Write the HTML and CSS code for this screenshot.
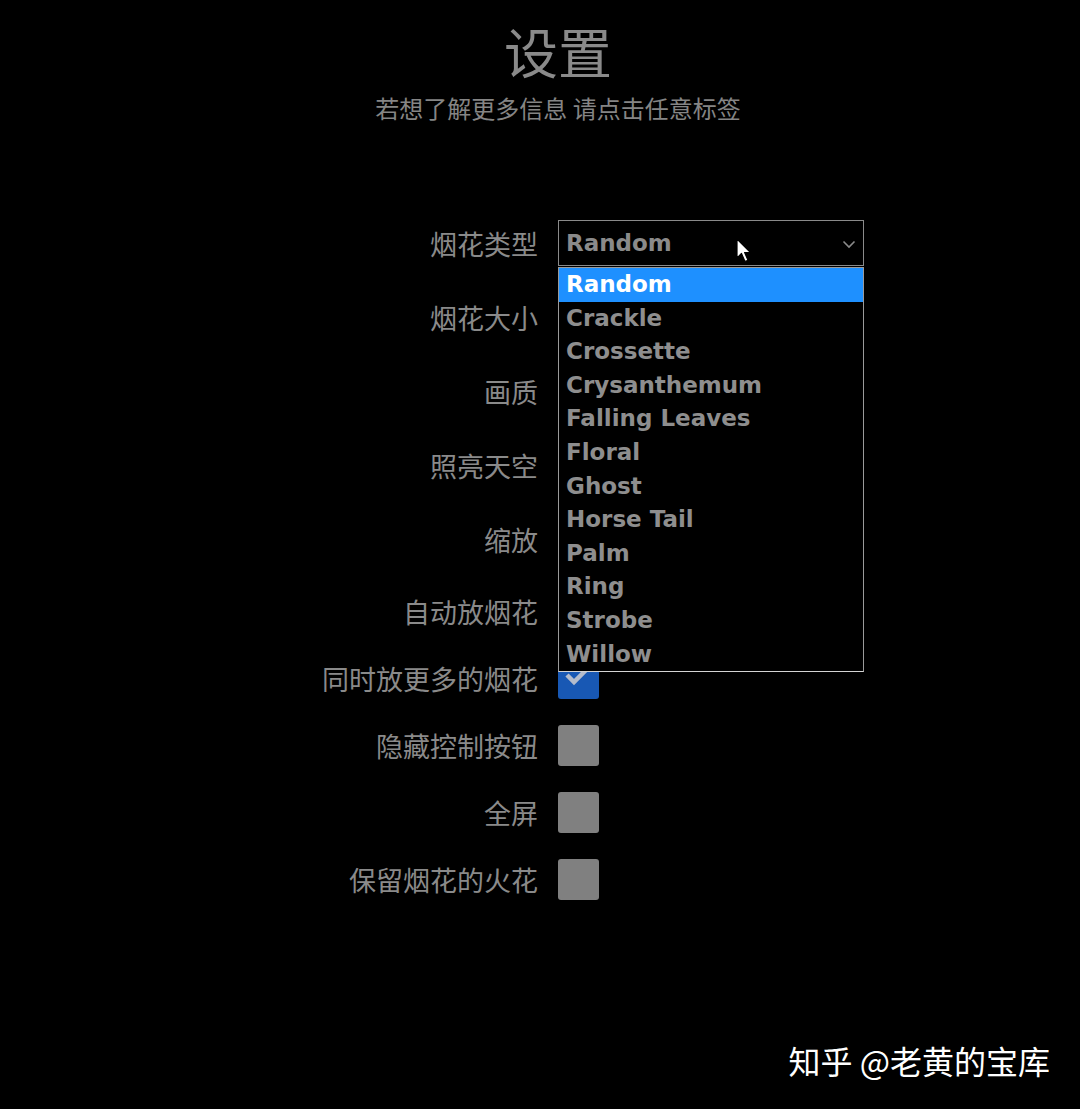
FILE: index.html
```html
<!DOCTYPE html>
<html lang="zh">
<head>
    <meta charset="UTF-8">
    <meta name="viewport" content="width=device-width, initial-scale=1.0">
    <title>设置</title>
    <link rel="stylesheet" href="styles.css">
</head>
<body>
    <main class="settings">
        <header class="intro">
            <h1>设置</h1>
            <p>若想了解更多信息 请点击任意标签</p>
        </header>

        <form class="config">
            <div class="row row-select">
                <label>烟花类型</label>
                <div class="field">
                    <div class="select">
                        <span>Random</span>
                        <svg class="chevron" width="14" height="9" viewBox="0 0 14 9"><path d="M1.5 1.5 L7 7 L12.5 1.5" fill="none" stroke="#8a8a8a" stroke-width="1.6"/></svg>
                        <svg class="cursor" width="16" height="26" viewBox="0 0 16 26"><path d="M1 1 L1 20 L5.5 15.5 L9 23.5 L12 22.2 L8.6 14.5 L14.5 14.5 Z" fill="#fff" stroke="#000" stroke-width="1.2" stroke-linejoin="round"/></svg>
                    </div>
                    <ul class="options">
                        <li class="active">Random</li>
                        <li>Crackle</li>
                        <li>Crossette</li>
                        <li>Crysanthemum</li>
                        <li>Falling Leaves</li>
                        <li>Floral</li>
                        <li>Ghost</li>
                        <li>Horse Tail</li>
                        <li>Palm</li>
                        <li>Ring</li>
                        <li>Strobe</li>
                        <li>Willow</li>
                    </ul>
                </div>
            </div>

            <!-- these controls sit under the open list -->
            <div class="row row-select">
                <label>烟花大小</label>
                <div class="field"><div class="select"></div></div>
            </div>

            <div class="row row-select">
                <label>画质</label>
                <div class="field"><div class="select"></div></div>
            </div>

            <div class="row row-select">
                <label>照亮天空</label>
                <div class="field"><div class="select"></div></div>
            </div>

            <div class="row row-select">
                <label>缩放</label>
                <div class="field"><div class="select"></div></div>
            </div>

            <div class="row row-check first-check">
                <label>自动放烟花</label>
                <div class="field"><span class="checkbox checked"></span></div>
            </div>

            <div class="row row-check">
                <label>同时放更多的烟花</label>
                <div class="field">
                    <span class="checkbox checked">
                        <svg width="41" height="41" viewBox="0 0 41 41"><path d="M9 17 L16 24 L31 9" fill="none" stroke="#b4bccc" stroke-width="4.5"/></svg>
                    </span>
                </div>
            </div>

            <div class="row row-check">
                <label>隐藏控制按钮</label>
                <div class="field"><span class="checkbox"></span></div>
            </div>

            <div class="row row-check">
                <label>全屏</label>
                <div class="field"><span class="checkbox"></span></div>
            </div>

            <div class="row row-check">
                <label>保留烟花的火花</label>
                <div class="field"><span class="checkbox"></span></div>
            </div>
        </form>
    </main>

    <div class="watermark">知乎 @老黄的宝库</div>
</body>
</html>
```

FILE: styles.css
```css
* {
    margin: 0;
    padding: 0;
    box-sizing: border-box;
}

html, body {
    height: 100%;
}

body {
    background-color: #000;
    color: #888;
    font-family: "Noto Sans CJK SC", "Noto Sans", sans-serif;
    position: relative;
    overflow: hidden;
}

.intro {
    text-align: center;
    padding-top: 18px;
    padding-left: 36px;
}

.intro h1 {
    font-size: 54px;
    font-weight: 400;
    line-height: 65px;
    color: #8a8a8a;
}

.intro p {
    margin-top: 9px;
    font-size: 24px;
    line-height: 32px;
    color: #858585;
}

.config {
    margin-top: 82px;
}

.row {
    display: grid;
    grid-template-columns: 538px 1fr;
    column-gap: 20px;
    align-items: center;
}

.row label {
    text-align: right;
    font-size: 27px;
    color: #8a8a8a;
}

.row-select {
    height: 74px;
}

.row-check {
    height: 67px;
}

.first-check {
    margin-top: 2px;
}

.field {
    position: relative;
}

.select {
    position: relative;
    width: 306px;
    height: 46px;
    border: 1px solid #8a8a8a;
    display: flex;
    align-items: center;
    padding-left: 7px;
    font-family: "DejaVu Sans", sans-serif;
    font-weight: bold;
    font-size: 23px;
    color: #8a8a8a;
}

.chevron {
    position: absolute;
    right: 7px;
    top: 19px;
}

.cursor {
    position: absolute;
    left: 177px;
    top: 17px;
}

.options {
    position: absolute;
    left: 0;
    top: 47px;
    width: 306px;
    list-style: none;
    background-color: #000;
    border: 1px solid #9a9a9a;
    border-bottom-color: #d4d4d4;
    z-index: 2;
}

.options li {
    height: 33.6px;
    line-height: 33.6px;
    padding-left: 7px;
    font-family: "DejaVu Sans", sans-serif;
    font-weight: bold;
    font-size: 23px;
    color: #8e8e8e;
}

.options li.active {
    background-color: #1e90ff;
    color: #fff;
}

.checkbox {
    display: block;
    width: 41px;
    height: 41px;
    border-radius: 3px;
    background-color: #808080;
}

.checkbox.checked {
    background-color: #1858b4;
}

.checkbox svg {
    display: block;
}

.watermark {
    position: absolute;
    right: 30px;
    bottom: 26px;
    font-size: 32px;
    color: #fff;
}
```
